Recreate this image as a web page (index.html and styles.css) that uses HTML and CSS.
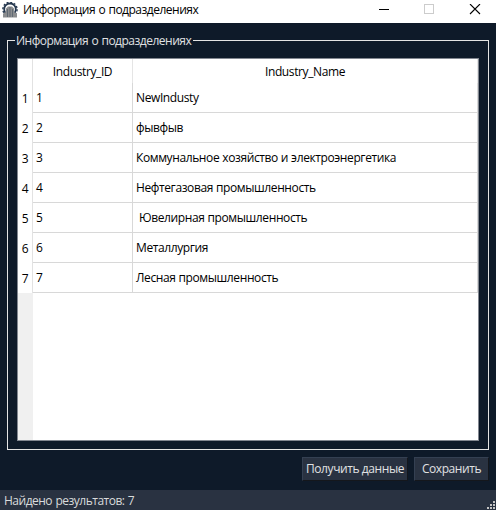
FILE: index.html
```html
<!DOCTYPE html>
<html lang="ru">
<head>
<meta charset="utf-8">
<title>Информация о подразделениях</title>
<link rel="stylesheet" href="styles.css">
</head>
<body>
<div class="window">
  <header class="titlebar">
    <svg class="app-icon" width="16" height="16" viewBox="0 0 16 16">
      <circle cx="8" cy="7.300" r="5.800" fill="#fff" stroke="#26384f" stroke-width="1.800"/>
      <circle cx="8" cy="7.300" r="7.100" fill="none" stroke="#26384f" stroke-width="1.400" stroke-dasharray="2 1.717"/>
      <path d="M1 15.500v-4l3-1.500V6.500l2-2h4l2 2V10l3 1.500v4z" fill="#8b8d8f"/>
      <path d="M5.500 7v8M8 5v10M10.500 7v8" stroke="#56616d" stroke-width=".8"/>
    </svg>
    <span class="caption">Информация о подразделениях</span>
    <svg class="controls" width="104" height="12" viewBox="0 0 104 12" fill="none" shape-rendering="crispEdges">
      <path d="M0 5.500h10" stroke="#000"/>
      <rect x="45.500" y=".5" width="9" height="9" stroke="#ccc"/>
      <path d="M91 0l10 10M101 0l-10 10" stroke="#000" stroke-width="1.100" shape-rendering="auto"/>
    </svg>
  </header>
  <main class="content">
    <fieldset class="group">
      <legend>Информация о подразделениях</legend>
      <div class="table">
        <div class="row head"><span class="num"></span><span class="id">Industry_ID</span><span class="name">Industry_Name</span></div>
        <div class="row"><span class="num">1</span><span class="id">1</span><span class="name">NewIndusty</span></div>
        <div class="row"><span class="num">2</span><span class="id">2</span><span class="name">фывфыв</span></div>
        <div class="row"><span class="num">3</span><span class="id">3</span><span class="name">Коммунальное хозяйство и электроэнергетика</span></div>
        <div class="row"><span class="num">4</span><span class="id">4</span><span class="name">Нефтегазовая промышленность</span></div>
        <div class="row"><span class="num">5</span><span class="id">5</span><span class="name"> Ювелирная промышленность</span></div>
        <div class="row"><span class="num">6</span><span class="id">6</span><span class="name">Металлургия</span></div>
        <div class="row"><span class="num">7</span><span class="id">7</span><span class="name">Лесная промышленность</span></div>
        <div class="rest"></div>
      </div>
    </fieldset>
    <div class="actions">
      <button class="fetch">Получить данные</button>
      <button class="save">Сохранить</button>
    </div>
  </main>
  <footer class="status">
    <span>Найдено результатов: 7</span>
    <svg class="grip" width="8" height="8" viewBox="0 0 8 8" fill="#c4c4c4" shape-rendering="crispEdges">
      <path d="M6 0h2v2H6zM3 3h2v2H3zM6 3h2v2H6zM0 6h2v2H0zM3 6h2v2H3zM6 6h2v2H6z"/>
    </svg>
  </footer>
</div>
</body>
</html>
```
FILE: styles.css
```css
* { box-sizing: border-box; }
body {
  margin: 0;
  font: 12px/16px "Open Sans", "Noto Sans", sans-serif;
  letter-spacing: -0.5px;
  word-spacing: 0.7px;
  color: #000;
}
.window { width: 496px; height: 510px; display: flex; flex-direction: column; background: #0e1a29; overflow: hidden; }
.titlebar { height: 23px; display: flex; align-items: flex-start; background: #fff; padding: 2px 13px 0 2px; }
.app-icon { margin-right: 5px; }
.controls { margin: 2px 0 0 auto; }
.content { flex: 1; padding: 10px 7px 0; display: flex; flex-direction: column; }
.group {
  margin: 0;
  min-width: 0;
  height: 417px;
  border: 1px solid #e4e4e4;
  padding: 9px;
  color: #e0e1e3;
}
.group legend { height: 15px; padding: 0 2px 0 1px; margin-left: -2px; margin-bottom: 1px; }
.table { height: 383px; width: 462px; display: flex; flex-direction: column; border: 1px solid #828790; background: #fff; color: #000; letter-spacing: -0.39px; word-spacing: 0.3px; }
.row { height: 30px; display: flex; line-height: 20px; }
.row span { white-space: pre; }
.num { width: 15px; padding-top: 6px; border-right: 1px solid #e2e2e2; text-align: center; }
.id { width: 100px; padding: 5px 0 0 3px; border-right: 1px solid #d8d8d8; border-bottom: 1px solid #d8d8d8; }
.name { width: 345px; padding: 5px 0 0 3px; border-right: 1px solid #d8d8d8; border-bottom: 1px solid #d8d8d8; }
.head { height: 24px; }
.head .id, .head .name { padding: 3px 0 0; text-align: center; border-bottom: 0; border-color: #e5e5e5; }
.rest { flex: 1; width: 15px; background: #f0f0f0; }
.actions { display: flex; justify-content: flex-end; gap: 6px; margin-top: 7px; }
button {
  height: 24px;
  padding: 0;
  border: 1px solid;
  border-color: #344052 #14171c #14171c #344052;
  background: #293241;
  color: #e0e1e3;
  font: inherit;
  letter-spacing: -0.42px;
  white-space: nowrap;
}
.fetch { width: 106px; }
.save { width: 75px; }
.status { height: 20px; display: flex; justify-content: space-between; align-items: flex-start; padding: 3px 0 0 4px; background: #293241; color: #d9dbdc; }
.grip { margin: 8px 1px 0 0; }
```
